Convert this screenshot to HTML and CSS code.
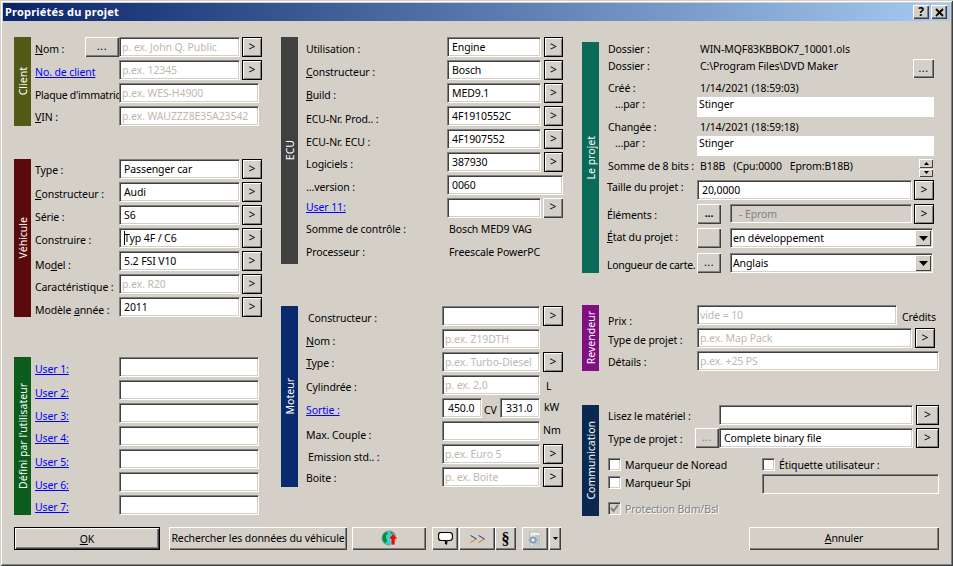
FILE: index.html
```html
<!DOCTYPE html>
<html lang="fr">
<head>
<meta charset="utf-8">
<title>Propriétés du projet</title>
<link rel="stylesheet" href="styles.css">
</head>
<body>
<div class="win">
  <div class="title">
    <span class="title-text">Propriétés du projet</span>
    <span class="tbtn tbtn-help">?</span>
    <span class="tbtn tbtn-x"><svg width="9" height="9" viewBox="0 0 9 9"><path d="M1 1l7 7M8 1L1 8" stroke="#000" stroke-width="1.8" fill="none"/></svg></span>
  </div>
  <div class="main">
    <div class="col">
      <section class="grp">
        <div class="bar c-client"><span>Client</span></div>
        <div class="rows rows-a">
          <div class="row"><div class="lbl w50"><u>N</u>om :</div><div class="btn b34 dots">...</div><div class="inp w121 ph">p. ex. John Q. Public</div><div class="go">&gt;</div></div>
          <div class="row"><div class="lbl w84"><a href="#">No. de client</a></div><div class="inp w121 ph">p.ex. 12345</div><div class="go">&gt;</div></div>
          <div class="row"><div class="lbl w84 tight">Plaque d'immatric</div><div class="inp w140 ph">p.ex. WES-H4900</div></div>
          <div class="row"><div class="lbl w84 t3"><u>V</u>IN :</div><div class="inp w140 ph">p.ex. WAUZZZ8E35A23542</div></div>
        </div>
      </section>
      <section class="grp mt33">
        <div class="bar c-veh"><span>Véhicule</span></div>
        <div class="rows rows-a">
          <div class="row"><div class="lbl w84 t3">Type :</div><div class="inp w121 val">Passenger car</div><div class="go">&gt;</div></div>
          <div class="row"><div class="lbl w84"><u>C</u>onstructeur :</div><div class="inp w121 val">Audi</div><div class="go">&gt;</div></div>
          <div class="row"><div class="lbl w84">Série :</div><div class="inp w121 val">S6</div><div class="go">&gt;</div></div>
          <div class="row"><div class="lbl w84">Construire :</div><div class="inp w121 val caret">Typ 4F / C6</div><div class="go">&gt;</div></div>
          <div class="row"><div class="lbl w84 t6">Mo<u>d</u>el :</div><div class="inp w121 val">5.2 FSI V10</div><div class="go">&gt;</div></div>
          <div class="row"><div class="lbl w84 t5">Caractéristique :</div><div class="inp w121 ph">p.ex. R20</div><div class="go">&gt;</div></div>
          <div class="row"><div class="lbl w84 t5">Modèle <u>a</u>nnée :</div><div class="inp w121 val">2011</div><div class="go">&gt;</div></div>
        </div>
      </section>
      <section class="grp mt40">
        <div class="bar c-user"><span>Défini par l'utilisateur</span></div>
        <div class="rows rows-a">
          <div class="row"><div class="lbl w84"><a href="#">User 1:</a></div><div class="inp w140"></div></div>
          <div class="row"><div class="lbl w84 t5"><a href="#">User 2:</a></div><div class="inp w140"></div></div>
          <div class="row"><div class="lbl w84 t5"><a href="#">User 3:</a></div><div class="inp w140"></div></div>
          <div class="row"><div class="lbl w84"><a href="#">User 4:</a></div><div class="inp w140"></div></div>
          <div class="row"><div class="lbl w84 t5"><a href="#">User 5:</a></div><div class="inp w140"></div></div>
          <div class="row"><div class="lbl w84 t5"><a href="#">User 6:</a></div><div class="inp w140"></div></div>
          <div class="row"><div class="lbl w84"><a href="#">User 7:</a></div><div class="inp w140"></div></div>
        </div>
      </section>
    </div>

    <div class="col">
      <section class="grp">
        <div class="bar c-ecu"><span>ECU</span></div>
        <div class="rows rows-b">
          <div class="row"><div class="lbl w141">Utilisation :</div><div class="inp w94 val">Engine</div><div class="go g19">&gt;</div></div>
          <div class="row"><div class="lbl w141"><u>C</u>onstructeur :</div><div class="inp w94 val">Bosch</div><div class="go g19">&gt;</div></div>
          <div class="row"><div class="lbl w141"><u>B</u>uild :</div><div class="inp w94 val">MED9.1</div><div class="go g19">&gt;</div></div>
          <div class="row"><div class="lbl w141 t5">ECU-Nr. Prod.. :</div><div class="inp w94 val">4F1910552C</div><div class="go g19">&gt;</div></div>
          <div class="row"><div class="lbl w141 t5">ECU-Nr. ECU :</div><div class="inp w94 val">4F1907552</div><div class="go g19">&gt;</div></div>
          <div class="row"><div class="lbl w141">Logiciels :</div><div class="inp w94 val">387930</div><div class="go g19">&gt;</div></div>
          <div class="row"><div class="lbl w141">...version :</div><div class="inp w116 val">0060</div></div>
          <div class="row"><div class="lbl w141 t1"><a href="#">User 11:</a></div><div class="inp w94"></div><div class="btn go-plain">&gt;</div></div>
          <div class="row"><div class="lbl w141 t0">Somme de contrôle :</div><div class="txt">Bosch MED9 VAG</div></div>
          <div class="row"><div class="lbl w141 t0">Processeur :</div><div class="txt">Freescale PowerPC</div></div>
        </div>
      </section>
      <section class="grp mt42">
        <div class="bar c-mot"><span>Moteur</span></div>
        <div class="rows rows-b">
          <div class="row"><div class="lbl w136 ind">Constructeur :</div><div class="inp w98"></div><div class="go g20">&gt;</div></div>
          <div class="row"><div class="lbl w136"><u>N</u>om :</div><div class="inp w98 ph">p.ex. Z19DTH</div></div>
          <div class="row"><div class="lbl w136 t3"><u>T</u>ype :</div><div class="inp w98 ph">p.ex. Turbo-Diesel</div><div class="go g20">&gt;</div></div>
          <div class="row"><div class="lbl w136">Cylindrée :</div><div class="inp w98 ph">p. ex. 2,0</div><div class="unit u-l">L</div></div>
          <div class="row"><div class="lbl w136"><a href="#">Sortie :</a></div><div class="inp w40 num">450.0</div><div class="unit u-cv">CV</div><div class="inp w40 num">331.0</div><div class="unit u-kw">kW</div></div>
          <div class="row"><div class="lbl w136 t6">Max. Couple :</div><div class="inp w98"></div><div class="unit u-nm">Nm</div></div>
          <div class="row"><div class="lbl w136 ind t5">Emission std.. :</div><div class="inp w98 ph">p.ex. Euro 5</div><div class="go g20">&gt;</div></div>
          <div class="row"><div class="lbl w136 t3">Boite :</div><div class="inp w98 ph">p. ex. Boite</div><div class="go g20">&gt;</div></div>
        </div>
      </section>
    </div>

    <div class="col col3">
      <section class="grp">
        <div class="bar c-prj"><span>Le projet</span></div>
        <div class="rows rows-c rows-prj">
          <div class="pr p1"><div class="plbl">Dossier :</div><div class="pval">WIN-MQF83KBBOK7_10001.ols</div></div>
          <div class="pr p2"><div class="plbl">Dossier :</div><div class="pval grow">C:\Program Files\DVD Maker</div><div class="btn dots b21">...</div></div>
          <div class="pr p3"><div class="plbl">Créé :</div><div class="pval">1/14/2021 (18:59:03)</div></div>
          <div class="pr p4"><div class="plbl par">...par :</div><div class="whitebox">Stinger</div></div>
          <div class="pr p3b"><div class="plbl">Changée :</div><div class="pval">1/14/2021 (18:59:18)</div></div>
          <div class="pr p4"><div class="plbl par">...par :</div><div class="whitebox">Stinger</div></div>
          <div class="pr p7"><div class="plbl sum">Somme de 8 bits :</div><div class="sumval">B18B &nbsp;&nbsp;(Cpu:0000 &nbsp;&nbsp;Eprom:B18B)</div>
            <div class="spin"><div class="sp"><svg width="5" height="3" viewBox="0 0 5 3"><path d="M2.5 0L5 3H0z"/></svg></div><div class="sp"><svg width="5" height="3" viewBox="0 0 5 3"><path d="M0 0h5L2.5 3z"/></svg></div></div>
          </div>
          <div class="pr p8"><div class="plbl up">Taille du projet :</div><div class="inp w215 val">20,0000</div><div class="go g20">&gt;</div></div>
          <div class="pr p9"><div class="plbl nar">Éléments :</div><div class="btn b24 dots-b">...</div><div class="inp dis w182">- Eprom</div><div class="go g20">&gt;</div></div>
          <div class="pr p10"><div class="plbl up1"><u>É</u>tat du projet :</div><div class="btn b24"></div><div class="inp w203 sel">en développement<span class="dd"><svg width="9" height="5" viewBox="0 0 9 5"><path d="M0 0h9L4.500 5z"/></svg></span></div></div>
          <div class="pr p11"><div class="plbl nar t4 tight2">Longueur de carte.</div><div class="btn b24 dots">...</div><div class="inp w203 sel">Anglais<span class="dd"><svg width="9" height="5" viewBox="0 0 9 5"><path d="M0 0h9L4.500 5z"/></svg></span></div></div>
        </div>
      </section>
      <section class="grp mt32">
        <div class="bar c-rev"><span>Revendeur</span></div>
        <div class="rows rows-c">
          <div class="row"><div class="plbl t8">Prix :</div><div class="inp w200 ph">vide = 10</div><div class="unit u-cr">Crédits</div></div>
          <div class="row"><div class="plbl t4">Type de projet :</div><div class="inp w215 ph">p.ex. Map Pack</div><div class="go g20">&gt;</div></div>
          <div class="row"><div class="plbl">Détails :</div><div class="inp w242 ph">p.ex. +25 PS</div></div>
        </div>
      </section>
      <section class="grp mt34">
        <div class="bar c-com"><span>Communication</span></div>
        <div class="rows rows-c">
          <div class="row"><div class="plbl w111">Lisez le matériel :</div><div class="inp w194"></div><div class="go g23">&gt;</div></div>
          <div class="row"><div class="plbl w87">Type de projet :</div><div class="btn b24 dots dimdots">...</div><div class="inp w194 val">Complete binary file</div><div class="go g23">&gt;</div></div>
          <div class="checks">
            <div class="chk-col">
              <label class="chk"><span class="box"></span>Marqueur de Noread</label>
              <label class="chk"><span class="box"></span>Marqueur Spi</label>
              <label class="chk chk-dis"><span class="box box-dis"><svg width="9" height="9" viewBox="0 0 9 9"><path d="M1 4l2.500 3L8 1" stroke="#808080" stroke-width="2" fill="none"/></svg></span>Protection Bdm/Bsl</label>
            </div>
            <div class="chk-col2">
              <label class="chk"><span class="box"></span>Étiquette utilisateur :</label>
              <div class="inp dis w177"></div>
            </div>
          </div>
        </div>
      </section>
    </div>
  </div>

  <div class="actions">
    <div class="dbtn a-ok"><span><u>O</u>K</span></div>
    <div class="btn a-search">Rechercher les données du véhicule</div>
    <div class="btn a-globe">
      <svg width="18" height="17" viewBox="0 0 18 17"><circle cx="8" cy="8" r="7.500" fill="#7f9a92"/><circle cx="8" cy="8" r="6.500" fill="#22d3e0"/><path d="M1.500 8c0-3 1.500-5 4-6l1.500 2-2 1v3l1 2-1 3C2.500 12.500 1.500 10.500 1.500 8zM9 1.500c3 .5 5 2.500 5.500 5L11 4.500z" fill="#0f8a20"/><path d="M12 3.500L17 9h-3v6h-4V9H7z" fill="#e60d0d" stroke="#fff" stroke-width=".5"/></svg>
    </div>
    <div class="btn a-speech"><svg width="15" height="13" viewBox="0 0 15 13"><path d="M3 .5h8.500q3 0 3 3v2q0 3-3 3H9l-.500 3.500-1-.500V8.500H3q-2.500 0-2.500-3v-2Q.5.500 3 .5z" fill="#fff" stroke="#000" stroke-width="1.200"/></svg></div>
    <div class="btn a-next"><svg width="15" height="8" viewBox="0 0 15 8"><path d="M.5.5L6.500 4M8.500.5L14.500 4" fill="none" stroke="#1f2f98"/><path d="M6.500 4L.5 7.500M14.500 4L8.500 7.500" fill="none" stroke="#c9781c"/></svg></div>
    <div class="btn a-par">§</div>
    <div class="btn a-note"><svg width="16" height="16" viewBox="0 0 16 16"><path d="M3 1h8l3 2v12H3z" fill="#f2f1ee" stroke="#b9b9b9"/><path d="M8 5h5M9 7h4M9 9h4M9 11h4M6 13h7" stroke="#8d9aa8"/><path d="M6 4.500v9M1.500 9h9M3 6l6 6M9 6l-6 6" stroke="#8ea0b8"/><circle cx="6" cy="9" r="3.500" fill="#8ea0b8"/><circle cx="6" cy="9" r="1.500" fill="#eef1f4"/></svg></div>
    <div class="btn a-drop"><svg width="5" height="3" viewBox="0 0 5 3"><path d="M0 0h5L2.500 3z"/></svg></div>
    <div class="btn a-cancel"><span><u>A</u>nnuler</span></div>
  </div>
</div>
</body>
</html>
```
FILE: styles.css
```css
* { box-sizing: border-box; }
html, body { margin: 0; padding: 0; background: #d4d0c8; }
body { width: 953px; height: 566px; overflow: hidden; font: 10.5px/16px "Noto Sans", sans-serif; letter-spacing: -.1px; color: #000; }
u { text-decoration: underline; }
a { color: #0000ff; text-decoration: underline; }

.win { width: 953px; height: 566px; padding: 3px; background: #d4d0c8; display: flex; flex-direction: column;
  box-shadow: inset 1px 1px 0 #d4d0c8, inset -1px -1px 0 #404040, inset 2px 2px 0 #fff, inset -2px -2px 0 #808080; }

.title { height: 18px; flex: none; display: flex; align-items: center; padding: 0 3px 0 2px;
  background: linear-gradient(90deg, #0a246a, #a6caf0); color: #fff; }
.title-text { flex: 1; font-size: 11px; font-weight: 700; letter-spacing: .2px; }
.tbtn { width: 16px; height: 14px; background: #d4d0c8; color: #000; font-weight: 700; font-size: 12px; line-height: 14px; text-align: center;
  display: flex; align-items: center; justify-content: center;
  box-shadow: inset 1px 1px 0 #fff, inset -1px -1px 0 #404040, inset -2px -2px 0 #808080; }
.tbtn-help { margin-right: 2px; }

.main { flex: none; height: 506px; padding: 16px 0 0 11px; display: grid; grid-template-columns: 248px 282px 358px; column-gap: 19px; align-items: start; }
.col3 { padding-top: 5px; }

.grp { display: flex; align-items: stretch; }
.mt33 { margin-top: 33px; }
.mt40 { margin-top: 40px; }
.mt42 { margin-top: 42px; }
.mt32 { margin-top: 32px; }
.mt34 { margin-top: 34px; }

.bar { width: 17px; flex: none; color: #fff; display: flex; align-items: center; justify-content: center; }
.bar span { writing-mode: vertical-rl; transform: rotate(180deg); white-space: nowrap; letter-spacing: 0; }
.c-client { background: #535a16; }
.c-veh { background: #5b0a0c; }
.c-user { background: #0c5c1c; }
.c-ecu { background: #404040; }
.c-mot { background: #0a2a6e; }
.c-prj { background: #0b6a58; }
.c-rev { background: #800f80; }
.c-com { background: #0a2850; }

.rows { flex: 1; min-width: 0; display: flex; flex-direction: column; gap: 3px; }
.rows-a { padding-left: 4px; }
.rows-b { padding-left: 8px; }
.rows-c { padding-left: 9px; }
.rows-prj { gap: 0; }

.row { height: 20px; display: flex; flex: none; white-space: nowrap; }
.lbl { flex: none; padding-top: 4px; white-space: nowrap; }
.tight { letter-spacing: -.25px; }
.tight2 { letter-spacing: -.3px; }
.ind { padding-left: 2px; }
.w50 { width: 50px; }
.w84 { width: 84px; }
.w141 { width: 141px; }
.w136 { width: 136px; }

.inp { flex: none; height: 20px; background: #fff; padding: 0 0 0 2px; line-height: 19px; overflow: hidden; white-space: nowrap;
  border: 1px solid; border-color: #808080 #fff #fff #808080;
  box-shadow: inset 1px 1px 0 #404040, inset -1px -1px 0 #d4d0c8; }
.ph { color: #bdb9b2; }
.val { padding-left: 4px; }
.num { padding-left: 5px; }
.dis { background: #d4d0c8; color: #808080; padding-left: 8px; }
.caret { position: relative; }
.caret::before { content: ""; position: absolute; left: 4px; top: 2px; width: 1px; height: 14px; background: #000; }
.w40 { width: 40px; }
.w94 { width: 94px; }
.w98 { width: 98px; }
.w116 { width: 116px; }
.w121 { width: 121px; }
.w140 { width: 140px; }
.w177 { width: 177px; }
.w182 { width: 182px; }
.w194 { width: 194px; }
.w200 { width: 200px; }
.w203 { width: 203px; }
.w215 { width: 215px; }
.w242 { width: 242px; }

.go { flex: none; width: 20px; height: 20px; margin-left: 2px; background: #d4d0c8; border: 1px solid #000; text-align: center; font-size: 12px; line-height: 17px; letter-spacing: 0;
  box-shadow: inset 1px 1px 0 #fff, inset -1px -1px 0 #808080; }
.g19 { width: 19px; margin-left: 3px; }
.g20 { width: 20px; margin-left: 3px; }
.g23 { width: 23px; margin-left: 3px; }
.pr .g20 { margin-left: 2px; }

.btn { flex: none; height: 20px; background: #d4d0c8; text-align: center; line-height: 17px;
  box-shadow: inset 1px 1px 0 #fff, inset -1px -1px 0 #404040, inset -2px -2px 0 #808080; }
.b34 { width: 34px; }
.b24 { width: 24px; margin-right: 9px; }
.b21 { width: 21px; height: 19px; margin-right: 6px; }
.dots { line-height: 19px; letter-spacing: .5px; }
.dots-b { font-weight: 700; line-height: 19px; }
.dimdots { color: #808080; margin-right: 0; }
.go-plain { width: 20px; margin-left: 2px; font-size: 12px; letter-spacing: 0; }

.txt { padding: 0 0 0 2px; }
.unit { flex: none; padding-top: 1px; }
.u-l { margin-left: 6px; padding-top: 3px; }
.u-cv { width: 16px; margin-left: 2px; padding-top: 4px; }
.u-kw { margin-left: 4px; }
.u-nm { margin-left: 3px; }
.u-cr { margin-left: 5px; padding-top: 4px; }

.pr { display: flex; flex: none; white-space: nowrap; }
.plbl { flex: none; width: 89px; padding-top: 3px; }
.w111 { width: 111px; }
.w87 { width: 87px; }
.par { padding-left: 7px; padding-top: 0; line-height: 14px; }
.up { margin-left: -1px; width: 90px; padding-top: 0; line-height: 14px; }
.up1 { margin-left: -1px; width: 90px; padding-top: 1px; }
.nar { margin-left: -1px; width: 90px; }
.pval { padding-left: 3px; }
.grow { flex: 1; }
.t0 { padding-top: 0; }
.t1 { padding-top: 1px; }
.t3 { padding-top: 3px; }
.t4 { padding-top: 4px; }
.t5 { padding-top: 5px; }
.t6 { padding-top: 6px; }
.t8 { padding-top: 8px; }
.p1 { height: 17px; }
.p2 { height: 19px; }
.p1 .plbl, .p2 .plbl, .p1 .pval, .p2 .pval { padding-top: 0; line-height: 14px; }
.p3 { height: 18px; margin-top: 1px; }
.p3b { height: 17px; margin-top: 2px; }
.p3 .plbl, .p3 .pval { padding-top: 1px; }
.p3b .plbl { padding-top: 0; }
.p4 { height: 20px; }
.p7 { height: 19px; margin-top: 3px; line-height: 14px; }
.p8 { height: 20px; margin-top: 2px; }
.p9 { height: 19px; margin-top: 4px; }
.p10 { height: 20px; margin-top: 5px; }
.p11 { height: 20px; margin-top: 5px; }
.whitebox { width: 237px; height: 20px; background: #fff; padding-left: 2px; line-height: 14px; }
.sum { padding-top: 0; width: 90px; }
.sumval { flex: 1; padding-left: 2px; }
.spin { width: 14px; margin-right: 7px; height: 19px; display: flex; flex-direction: column; }
.sp { height: 9px; margin-bottom: 1px; background: #d4d0c8; display: flex; align-items: center; justify-content: center;
  box-shadow: inset 1px 1px 0 #fff, inset -1px -1px 0 #404040; }
.sp svg, .dd svg, .a-drop svg { display: block; }
.p9 .inp { height: 19px; line-height: 18px; }
.sel { position: relative; }
.dd { position: absolute; top: 1px; right: 1px; width: 16px; height: 16px; background: #d4d0c8; display: flex; align-items: center; justify-content: center;
  box-shadow: inset 1px 1px 0 #fff, inset -1px -1px 0 #404040; }

.checks { display: flex; margin-top: 7px; }
.chk-col { width: 154px; display: flex; flex-direction: column; }
.chk-col2 { display: flex; flex-direction: column; }
.chk { height: 18px; display: flex; align-items: flex-start; line-height: 14px; }
.chk-col .chk:nth-child(2) { height: 26px; }
.chk-col .chk-dis { height: 14px; }
.chk-col2 .chk { height: 16px; }
.box { width: 13px; height: 13px; margin-right: 4px; background: #fff; flex: none;
  border: 1px solid; border-color: #808080 #fff #fff #808080; box-shadow: inset 1px 1px 0 #404040, inset -1px -1px 0 #d4d0c8; display: flex; align-items: center; justify-content: center; }
.box-dis { background: #d4d0c8; }
.chk-dis { color: #808080; text-shadow: 1px 1px 0 #fff; }

.actions { flex: none; height: 23px; padding: 0 11px; display: flex; }
.actions .btn { height: 23px; display: flex; align-items: center; justify-content: center; white-space: nowrap; }
.dbtn { width: 146px; height: 23px; background: #d4d0c8; border: 1px solid #000; display: flex; align-items: center; justify-content: center;
  box-shadow: inset 1px 1px 0 #fff, inset -1px -1px 0 #404040, inset -2px -2px 0 #808080; }
.a-search { width: 178px; margin-left: 9px; }
.a-globe { width: 74px; margin-left: 5px; padding-left: 2px; }
.a-speech { width: 26px; margin-left: 6px; }
.a-next { width: 36px; margin-left: 1px; }
.a-par { width: 21px; font: 700 16px/23px "Liberation Serif", serif; letter-spacing: 0; }
.a-note { width: 26px; margin-left: 6px; }
.a-drop { width: 12px; margin-left: 1px; }
.a-cancel { width: 190px; margin-left: auto; }
```
